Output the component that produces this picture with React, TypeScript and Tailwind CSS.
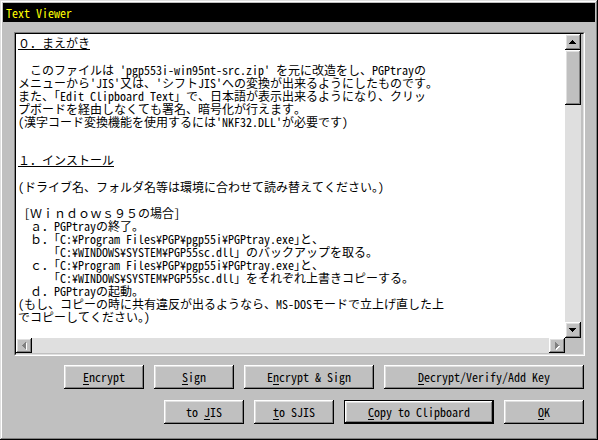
import React from "react";

const raised =
	"shadow-[inset_-1px_-1px_#000000,inset_1px_1px_#ffffff,inset_-2px_-2px_#808080,inset_2px_2px_#dfdfdf]";

const mono = "font-['Noto_Sans_Mono_CJK_JP','Noto_Sans_CJK_JP',monospace]";

type Line = string | { t: string; u: true };

const lines: Line[] = [
	{ t: "０．まえがき", u: true },
	"",
	"　このファイルは 'pgp553i-win95nt-src.zip' を元に改造をし、PGPtrayの",
	"メニューから'JIS'又は、'シフトJIS'への変換が出来るようにしたものです。",
	"また、「Edit Clipboard Text」で、日本語が表示出来るようになり、クリッ",
	"プボードを経由しなくても署名、暗号化が行えます。",
	"(漢字コード変換機能を使用するには'NKF32.DLL'が必要です)",
	"",
	"",
	{ t: "１．インストール", u: true },
	"",
	"(ドライブ名、フォルダ名等は環境に合わせて読み替えてください。)",
	"",
	" [Ｗｉｎｄｏｗｓ９５の場合]",
	"  ａ．PGPtrayの終了。",
	"  ｂ．｢C:¥Program Files¥PGP¥pgp55i¥PGPtray.exe｣と、",
	"      ｢C:¥WINDOWS¥SYSTEM¥PGP55sc.dll｣ のバックアップを取る。",
	"  ｃ．｢C:¥Program Files¥PGP¥pgp55i¥PGPtray.exe｣と、",
	"      ｢C:¥WINDOWS¥SYSTEM¥PGP55sc.dll｣ をそれぞれ上書きコピーする。",
	"  ｄ．PGPtrayの起動。",
	"(もし、コピーの時に共有違反が出るようなら、MS-DOSモードで立上げ直した上",
	"でコピーしてください。)",
];

function Arrow({ dir, disabled }: { dir: "up" | "down" | "left" | "right"; disabled?: boolean }) {
	const pts = {
		up: "3.5,0 7,4 0,4",
		down: "0,0 7,0 3.5,4",
		left: "4,0 4,7 0,3.5",
		right: "0,0 0,7 4,3.5",
	}[dir];
	const vertical = dir === "up" || dir === "down";
	const w = vertical ? 8 : 5;
	const h = vertical ? 5 : 8;
	return (
		<svg width={w} height={h} viewBox={`0 0 ${w} ${h}`} shapeRendering="crispEdges">
			{disabled && <polygon points={pts} fill="#ffffff" transform="translate(1 1)" />}
			<polygon points={pts} fill={disabled ? "#808080" : "#000000"} />
		</svg>
	);
}

function ScrollBtn({ dir, disabled }: { dir: "up" | "down" | "left" | "right"; disabled?: boolean }) {
	const size = dir === "up" || dir === "down" ? "h-[16px] w-[16px]" : "h-[15px] w-[16px]";
	return (
		<div className={`flex shrink-0 items-center justify-center bg-[#c0c0c0] ${size} ${raised}`}>
			<Arrow dir={dir} disabled={disabled} />
		</div>
	);
}

function Btn({
	pre,
	key1,
	post,
	width,
	isDefault,
}: {
	pre?: string;
	key1: string;
	post?: string;
	width: string;
	isDefault?: boolean;
}) {
	return (
		<div
			className={`flex h-[24px] items-center justify-center bg-[#c0c0c0] text-[12px] text-black ${width} ${raised} ${
				isDefault ? "border border-black" : ""
			}`}
		>
			<span className="whitespace-pre">
				{pre}
				<span className="underline underline-offset-2">{key1}</span>
				{post}
			</span>
		</div>
	);
}

export default function App() {
	return (
		<div
			className={`flex h-[440px] w-[598px] flex-col bg-[#c0c0c0] p-[3px] ${mono} shadow-[inset_-1px_-1px_#000000,inset_1px_1px_#dfdfdf,inset_-2px_-2px_#808080,inset_2px_2px_#ffffff]`}
		>
			{/* title bar */}
			<div className="flex h-[19px] shrink-0 items-center bg-black pl-[3px] text-[12px] text-[#ffff00]">
				Text Viewer
			</div>

			{/* text panel */}
			<div className="ml-[11px] mr-[10px] mt-[10px] h-[324px] border border-b-white border-l-[#808080] border-r-white border-t-[#808080]">
				<div className="flex h-full border border-b-[#dfdfdf] border-l-black border-r-[#dfdfdf] border-t-black pb-[1px] pr-[2px]">
					<div className="flex min-w-0 flex-1 flex-col">
						<div className="flex-1 overflow-hidden bg-white pl-[2px] pt-[3px] text-[12px] leading-[13px] text-black">
							{lines.map((l, i) =>
								typeof l === "string" ? (
									<div key={i} className="h-[13px] whitespace-pre">
										{l}
									</div>
								) : (
									<div key={i} className="flex h-[13px]">
										<span className="h-[13px] whitespace-pre border-b border-black leading-[12px]">
											{l.t}
										</span>
									</div>
								),
							)}
						</div>
						<div className="flex h-[15px] shrink-0 bg-[#dfdfdf]">
							<ScrollBtn dir="left" disabled />
							<div className="flex-1" />
							<ScrollBtn dir="right" disabled />
						</div>
					</div>
					<div className="flex w-[16px] shrink-0 flex-col">
						<div className="flex flex-1 flex-col bg-[#dfdfdf]">
							<ScrollBtn dir="up" />
							<div className={`h-[55px] shrink-0 bg-[#c0c0c0] ${raised}`} />
							<div className="flex-1" />
							<ScrollBtn dir="down" />
						</div>
						<div className="h-[15px] shrink-0" />
					</div>
				</div>
			</div>

			{/* buttons */}
			<div className="mt-[9px] flex flex-col gap-[11px] pr-[11px]">
				<div className="flex justify-end gap-[10px]">
					<Btn key1="E" post="ncrypt" width="w-[80px]" />
					<Btn key1="S" post="ign" width="w-[80px]" />
					<Btn pre="E" key1="n" post="crypt & Sign" width="w-[130px]" />
					<Btn key1="D" post="ecrypt/Verify/Add Key" width="w-[200px]" />
				</div>
				<div className="flex justify-end gap-[10px]">
					<Btn pre="to " key1="J" post="IS" width="w-[80px]" />
					<Btn key1="t" post="o SJIS" width="w-[80px]" />
					<Btn key1="C" post="opy to Clipboard" width="w-[150px]" isDefault />
					<Btn key1="O" post="K" width="w-[80px]" />
				</div>
			</div>
		</div>
	);
}
